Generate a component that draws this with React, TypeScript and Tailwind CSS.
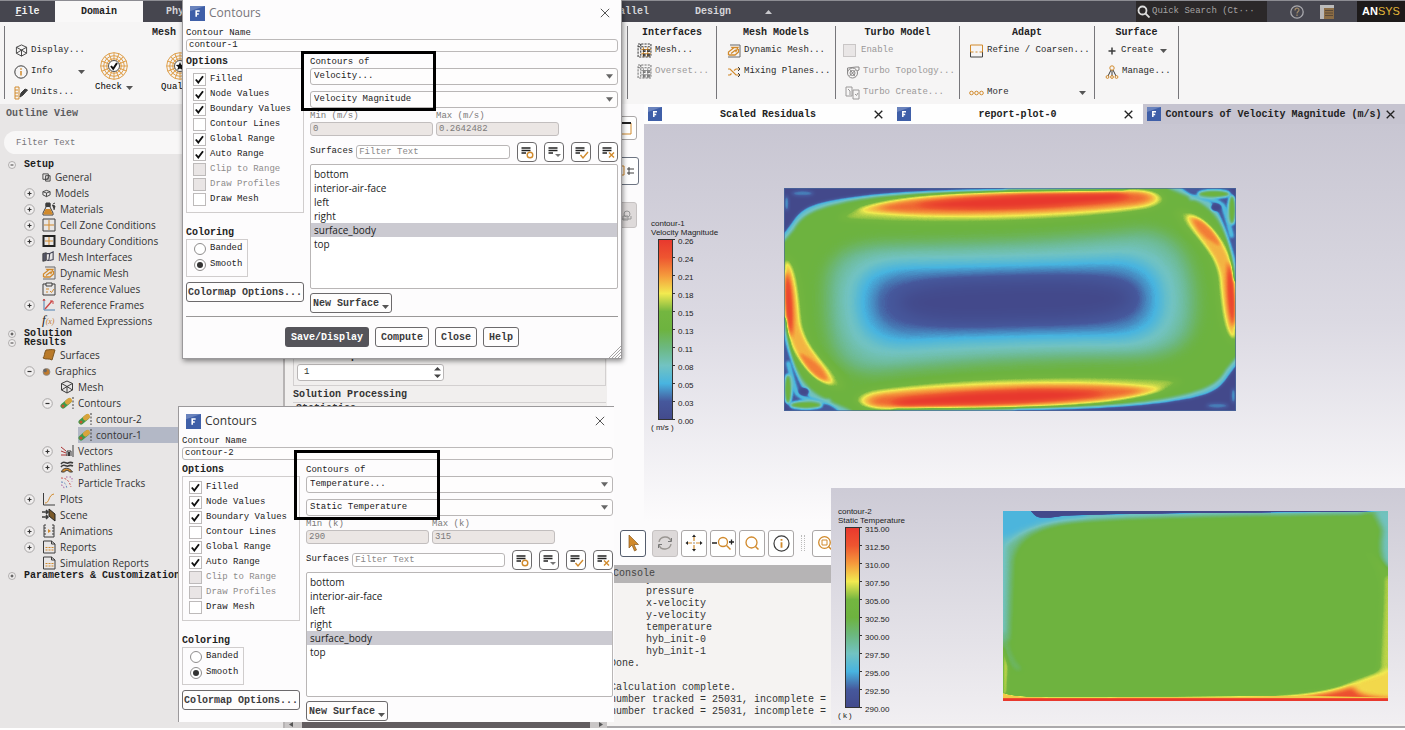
import React from "react";

/* ---------- colour map shared by legends and plots ---------- */
const RAMP = ["#434a8c", "#46589c", "#48b4e0", "#72c3c2", "#6cb880", "#6db33f", "#74b640", "#f2ea50", "#f59a3c", "#ee5530", "#e8382e"];

function gray(t: number) {
  const v = Math.round(t * 255);
  return `rgb(${v},${v},${v})`;
}

function ColorMapFilter({ id }: { id: string }) {
  return (
    <filter id={id} x="0" y="0" width="1" height="1" colorInterpolationFilters="sRGB">
      <feComponentTransfer>
        <feFuncR type="table" tableValues=".263 .275 .282 .447 .424 .427 .455 .949 .96 .933 .91" />
        <feFuncG type="table" tableValues=".29 .345 .706 .765 .72 .702 .714 .918 .604 .333 .22" />
        <feFuncB type="table" tableValues=".549 .612 .878 .76 .5 .247 .25 .314 .235 .188 .18" />
      </feComponentTransfer>
    </filter>
  );
}

function Blur({ id, d }: { id: string; d: string }) {
  return (
    <filter id={id} x="-50%" y="-100%" width="200%" height="300%" colorInterpolationFilters="sRGB">
      <feGaussianBlur stdDeviation={d} />
    </filter>
  );
}

function VelocityHalf() {
  return (
    <g>
      {/* lid jet */}
      <path d="M200 146 C250 96 450 64 750 58 L1110 56 C1200 62 1210 104 1120 120 C900 154 500 170 200 146Z" fill={gray(0.65)} filter="url(#v10)" />
      <path d="M262 120 C320 88 500 72 720 65 L1110 61 C1172 66 1182 92 1124 107 C940 134 480 152 262 120Z" fill={gray(0.76)} filter="url(#vJet)" />
      <path d="M320 114 C380 90 520 78 720 71 L1090 66 C1150 70 1156 88 1106 97 C920 120 480 138 320 114Z" fill={gray(0.87)} filter="url(#vJet)" />
      <path d="M440 104 C540 86 700 78 800 74 L1040 70 C1090 74 1070 86 1000 92 C800 112 580 120 440 104Z" fill={gray(1)} filter="url(#vJet)" />
      {/* upper left corner */}
      <path d="M20 30 L1120 30 L1060 55 C560 58 330 68 210 98 C120 118 92 140 72 176 L42 212 L20 212Z" fill={gray(0.28)} filter="url(#v5)" />
      <path d="M20 30 L760 30 L700 54 C420 58 300 68 190 88 C110 104 90 120 66 156 L42 188 L20 188Z" fill={gray(0)} filter="url(#v5)" />
      <ellipse cx="98" cy="68" rx="34" ry="9" fill={gray(0.15)} filter="url(#v5)" />
      <ellipse cx="50" cy="98" rx="6" ry="24" fill={gray(0.2)} filter="url(#v5)" />
      {/* right wall stream */}
      <path d="M1215 118 C1280 100 1380 210 1398 300 L1398 530 C1336 490 1352 350 1326 270 C1296 200 1236 190 1215 118Z" fill={gray(0.63)} filter="url(#v10)" />
      <path d="M1250 136 C1290 124 1350 190 1376 256 C1390 310 1396 400 1394 506 C1368 490 1358 400 1352 320 C1338 240 1266 190 1250 136Z" fill={gray(0.77)} filter="url(#v7)" />
      <path d="M1268 146 C1298 142 1336 190 1352 226 C1316 212 1280 184 1268 146Z" fill={gray(0.84)} filter="url(#v5)" />
      <path d="M1376 270 C1394 320 1398 400 1392 472 C1374 440 1368 340 1376 270Z" fill={gray(0.98)} filter="url(#v7)" />
      {/* upper right corner */}
      <path d="M1195 40 L1195 52 C1250 78 1300 90 1335 135 C1370 180 1388 260 1394 330 L1420 330 L1420 40Z" fill={gray(0.3)} filter="url(#v5)" />
      <path d="M1225 40 C1240 70 1290 84 1318 92 C1350 120 1382 210 1398 285 L1410 285 L1410 40Z" fill={gray(0.1)} filter="url(#v3)" />
      <path d="M1258 84 C1300 72 1340 88 1360 106 C1372 140 1378 170 1386 200" fill="none" stroke={gray(0.28)} strokeWidth="10" filter="url(#v5)" />
      <ellipse cx="1332" cy="70" rx="48" ry="11" fill={gray(0.52)} filter="url(#v5)" />
      <ellipse cx="1386" cy="118" rx="11" ry="44" fill={gray(0.52)} filter="url(#v5)" />
      <path d="M1374 48 L1404 48 L1404 86Z" fill={gray(0)} filter="url(#v3)" />
      <ellipse cx="1338" cy="110" rx="15" ry="11" fill={gray(0)} filter="url(#v3)" />
    </g>
  );
}

function VelocityPlot() {
  return (
    <svg viewBox="42 52 1356 670" preserveAspectRatio="none" className="mt-16 h-[223px] w-[452px] shrink-0 overflow-hidden" role="img" aria-label="Velocity magnitude field">
      <defs>
        <ColorMapFilter id="velMap" />
        <Blur id="v3" d="3" />
        <Blur id="v5" d="5" />
        <Blur id="v7" d="7" />
        <Blur id="v10" d="14 10" />
        <Blur id="vJet" d="16 7" />
        <Blur id="v16" d="16" />
        <Blur id="v22" d="22" />
        <Blur id="v30" d="26 22" />
      </defs>
      <g filter="url(#velMap)">
        <rect x="42" y="52" width="1356" height="670" fill={gray(0.5)} />
        <path d="M170 360 C170 260 220 228 330 222 C620 220 900 206 1110 180 C1226 182 1274 270 1274 400 C1274 510 1226 552 1120 556 C860 560 620 568 330 604 C205 618 165 520 170 360Z" fill={gray(0.36)} filter="url(#v30)" />
        <path d="M215 385 C215 290 270 254 380 250 C640 248 870 240 1070 226 C1180 224 1228 300 1228 390 C1228 490 1166 534 1060 536 C820 536 620 542 380 562 C250 572 215 490 215 385Z" fill={gray(0.29)} filter="url(#v22)" />
        <path d="M262 392 C262 314 310 286 400 282 C640 280 860 274 1045 264 C1140 266 1178 320 1178 390 C1178 466 1130 502 1040 504 C810 506 630 508 405 522 C300 524 262 470 262 392Z" fill={gray(0.2)} filter="url(#v16)" />
        <path d="M310 396 C310 340 345 318 430 314 C640 310 860 304 1020 300 C1100 304 1132 340 1130 388 C1128 440 1096 468 1020 472 C800 474 640 476 430 486 C345 486 310 450 310 396Z" fill={gray(0.11)} filter="url(#v22)" />
        <path d="M380 394 C400 340 560 335 720 330 C900 325 1060 325 1090 380 C1060 450 880 448 720 452 C560 458 400 460 380 394Z" fill={gray(0)} filter="url(#v30)" />
        <VelocityHalf />
        <g transform="rotate(180 720 387)">
          <VelocityHalf />
        </g>
      </g>
      <rect x="43" y="53" width="1354" height="668" fill="none" stroke="#4a6a9c" strokeWidth="2" />
    </svg>
  );
}

function TemperaturePlot() {
  return (
    <svg viewBox="473 93 1050 571" preserveAspectRatio="none" className="mt-[23px] h-[190px] w-[385px] shrink-0 overflow-hidden" role="img" aria-label="Static temperature field">
      <defs>
        <ColorMapFilter id="tempMap" />
        <Blur id="t2" d="2" />
        <Blur id="t4" d="4" />
        <Blur id="t8" d="8" />
      </defs>
      <g filter="url(#tempMap)">
        <rect x="473" y="93" width="1050" height="571" fill={gray(0.52)} />
        <path d="M440 70 L1500 70 L1480 98 C1100 102 800 108 680 124 C560 140 514 176 500 240 L491 480 L440 520Z" fill={gray(0.38)} filter="url(#t8)" />
        <path d="M440 70 L1480 70 L1450 98 C1000 103 760 109 620 124 C560 136 510 164 482 200 L476 460 L440 460Z" fill={gray(0.27)} filter="url(#t8)" />
        <path d="M440 70 L700 70 L700 108 C600 116 540 136 490 168 L440 180Z" fill={gray(0.21)} filter="url(#t8)" />
        <path d="M530 70 L1540 70 L1540 94 L1400 96 C1000 98 760 102 640 107 C600 114 570 118 558 104Z" fill={gray(0)} filter="url(#t2)" />
        <path d="M480 490 C486 530 505 560 520 572" stroke={gray(0.4)} strokeWidth="12" fill="none" filter="url(#t8)" />
        <path d="M473 500 L488 560 L484 640 L473 650Z" fill={gray(0.66)} filter="url(#t4)" />
        <path d="M1480 85 L1550 85 L1550 270 L1522 270 C1500 230 1502 190 1508 150Z" fill={gray(0.3)} filter="url(#t8)" />
        <path d="M1425 180 C1500 240 1510 300 1508 400 L1506 560 C1470 610 1380 640 1250 645 L1550 660 L1550 290Z" fill={gray(0.59)} filter="url(#t8)" />
        <path d="M1515 290 L1540 290 L1540 600 L1500 580Z" fill={gray(0.66)} filter="url(#t8)" />
        <path d="M1110 656 C1260 650 1340 644 1400 618 C1450 594 1490 580 1550 562 L1550 680 L1110 680Z" fill={gray(0.72)} filter="url(#t8)" />
        <path d="M1220 658 C1340 650 1390 634 1430 622 C1430 645 1470 654 1550 658 L1550 680 L1220 680Z" fill={gray(0.92)} filter="url(#t8)" />
        <path d="M460 634 C490 656 560 654 900 651 L1300 648 L1550 654 L1550 690 L460 690Z" fill={gray(0.74)} filter="url(#t2)" />
        <rect x="440" y="656" width="1120" height="24" fill={gray(1)} filter="url(#t2)" />
      </g>
    </svg>
  );
}

function Legend({ id, name, field, unit, ticks }: { id: string; name: string; field: string; unit: string; ticks: string[] }) {
  const stops = [...RAMP].reverse();
  return (
    <div className="shrink-0 font-['Liberation_Sans',sans-serif] text-[8px] leading-[9px] text-[#222]">
      <div>{name}</div>
      <div className="whitespace-nowrap">{field}</div>
      <div className="flex h-[186px] gap-[3px] pl-[7px]">
        <svg viewBox="0 0 17 182" className="mt-[2px] h-[182px] w-[17px] shrink-0">
          <defs>
            <linearGradient id={id} x1="0" y1="0" x2="0" y2="1">
              {stops.map((c, i) => (
                <stop key={c} offset={`${i * 10}%`} stopColor={c} />
              ))}
            </linearGradient>
          </defs>
          <rect x=".5" y=".5" width="14" height="180" fill={`url(#${id})`} stroke="#333" strokeWidth="1" />
          {ticks.map((t, i) => (
            <path key={t} d={`M14 ${0.5 + i * 18}h3`} stroke="#333" strokeWidth="1" />
          ))}
        </svg>
        <ul>
          {ticks.map((t) => (
            <li key={t} className="h-[18px]">{t}</li>
          ))}
        </ul>
      </div>
      <div>{unit}</div>
    </div>
  );
}

/* ---------- icons ---------- */
const O = "#d18a2c";
const K = "#3c3c3c";

function Svg({ w = 14, h = 14, vb = "0 0 14 14", children }: { w?: number; h?: number; vb?: string; children: React.ReactNode }) {
  return (
    <svg width={w} height={h} viewBox={vb} fill="none" stroke={K} strokeWidth="1" className="shrink-0" aria-hidden="true">
      {children}
    </svg>
  );
}

const IconCube = ({ s = 13 }: { s?: number }) => (
  <Svg w={s} h={s}>
    <path d="M7 1 12.5 3.500v6.500L7 13 1.500 10v-6.500ZM1.500 3.500 7 6.500l5.500-3M7 6.500V13M1.500 10 7 6.500 12.500 10" />
  </Svg>
);
const IconInfo = ({ s = 14 }: { s?: number }) => (
  <Svg w={s} h={s}>
    <circle cx="7" cy="7" r="6.200" />
    <path d="M7 6v4.500M7 3.300v1.500" stroke={O} strokeWidth="1.500" />
  </Svg>
);
const IconUnits = () => (
  <Svg>
    <path d="M1 1h4v12H1ZM1 4h3M1 7h3M1 10h3" stroke={O} />
    <path d="M6 11 7 7l4-4 2.500 1L9 9Z" fill={K} />
  </Svg>
);
const IconWheel = ({ star }: { star?: boolean }) => (
  <Svg w={28} h={28} vb="0 0 28 28">
    <g stroke="#dfa04c">
      <circle cx="14" cy="14" r="13.300" />
      <circle cx="14" cy="14" r="10.300" />
      <circle cx="14" cy="14" r="7.300" />
      {[0, 22, 45, 67, 90, 112, 135, 157].map((a) => (
        <path key={a} d="M14 .7v26.600" transform={`rotate(${a} 14 14)`} />
      ))}
    </g>
    <circle cx="14" cy="14" r="5.500" fill="#fff" stroke="#555" />
    {star ? (
      <path d="m14 10 1.200 2.800 3 .2-2.300 2 .8 3-2.700-1.600L11.300 18l.8-3-2.300-2 3-.2Z" fill="#111" stroke="none" />
    ) : (
      <path d="m11 14 2.200 2.800L17 11" stroke="#111" strokeWidth="2" />
    )}
  </Svg>
);
const IconGrid = ({ c = O, b = K }: { c?: string; b?: string }) => (
  <Svg w={15} h={15}>
    <path d="M1 13V1h12v12ZM3.500 1v12M1 3.500h12" stroke={b} strokeDasharray="2 1" />
    <path d="M4 6h9M4 10h9M6 4v9M10 4v9" stroke={c} />
    <path d="M6 6.500h1.500v1.500H6ZM10 6.500h1.500v1.500H10ZM6 10.500h1.500V12H6ZM10 10.500h1.500V12H10Z" stroke={b} />
  </Svg>
);
const IconDyn = ({ s = 14 }: { s?: number }) => (
  <Svg w={s} h={s}>
    <path d="M3 1h10v12H1" stroke="#666" />
    <path d="M1.500 11V8L6 4.500l-1-1h6L9 7.500l-.7-1.200L4 9.500M1.500 11 8 11l3.500-3V5" stroke={O} strokeWidth="1.300" />
  </Svg>
);
const IconMix = () => (
  <Svg>
    <path d="M1 4h2l6 6h4M1 10h2l1.500-1.500M7 5.500 9 4h4" stroke={O} strokeWidth="1.200" />
    <path d="m11 2 2 2-2 2M11 8l2 2-2 2" />
  </Svg>
);
const IconTopo = () => (
  <Svg>
    <g stroke="#8a8888">
      <circle cx="6.500" cy="8" r="5" />
      <circle cx="6.500" cy="8" r="2.500" />
      <path d="M1.500 8V3l8.500-1h3v3l-2 1M4 4.500l5 7M9.500 5l-6 6" />
    </g>
  </Svg>
);
const IconPages = () => (
  <Svg w={15} h={14} vb="0 0 15 14">
    <g stroke="#9a9898">
      <path d="M1 1h6v9H1ZM3 3l2 2v4M8 4h6v9H8ZM10 8l1.500 1.500L13 7" />
    </g>
  </Svg>
);
const IconRefine = () => (
  <Svg w={15} h={14}>
    <path d="M1 8V1h12v7" stroke={O} />
    <path d="M1 8v5h12V8" stroke="#444" />
    <path d="M1 8h3M6 8h2M10 8h3" stroke={O} />
  </Svg>
);
const IconMore = () => (
  <Svg w={15} h={6} vb="0 0 15 6">
    <circle cx="2.500" cy="3" r="1.800" stroke={O} />
    <circle cx="7.500" cy="3" r="1.800" stroke={O} />
    <circle cx="12.500" cy="3" r="1.800" stroke={O} />
  </Svg>
);
const IconManage = () => (
  <Svg>
    <path d="M6 5 3 11M8 5l3 6M7 5v6" />
    <circle cx="7" cy="3" r="2.200" stroke={O} />
    <circle cx="2.500" cy="12" r="1.400" stroke={O} />
    <circle cx="7" cy="12" r="1.400" stroke={O} />
    <circle cx="11.500" cy="12" r="1.400" stroke={O} />
  </Svg>
);
const Caret = ({ up }: { up?: boolean }) => (
  <svg width="7" height="4" viewBox="0 0 7 4" className="shrink-0" aria-hidden="true">
    <path d={up ? "M0 4h7L3.500 0Z" : "M0 0h7L3.500 4Z"} fill={up ? "#c8c8cc" : "#555"} />
  </svg>
);
const IconX = ({ s = 9, c = "#222", w = 1.5 }: { s?: number; c?: string; w?: number }) => (
  <svg width={s} height={s} viewBox="0 0 10 10" className="shrink-0" aria-hidden="true">
    <path d="M.8.8 9.200 9.200M9.200.8.8 9.200" stroke={c} strokeWidth={w} />
  </svg>
);
const LogoF = ({ s = 14 }: { s?: number }) => (
  <svg width={s} height={s} viewBox="0 0 14 14" className="shrink-0" aria-hidden="true">
    <rect width="14" height="14" fill="#3f5fa8" />
    <path d="M0 0h14L0 5Z" fill="#6a83bd" />
    <path d="M5.800 10v-5.300h3.200M5.800 7.400h2.400" stroke="#fff" strokeWidth="1.500" fill="none" />
  </svg>
);

/* outline tree icons */
const treeIcons: Record<string, React.ReactNode> = {
  general: (
    <Svg w={9} h={9} vb="0 0 10 10"><path d="M1 1h6v6H1ZM4 3h5v6H4ZM5 7l3-3" /></Svg>
  ),
  models: (
    <Svg w={9} h={9} vb="0 0 10 10"><path d="M5 1.500 9 3v3.500L5 8.500 1 6.500V3ZM1 3l4 1.500L9 3M5 4.500v4" /></Svg>
  ),
  materials: (
    <Svg><path d="M4 1h4v4l3 6v2H1v-2l3-6Z" /><path d="M3.500 7h5l2 4.500v1h-9v-1Z" fill={O} stroke="none" /><path d="M4 1.500h4v3H4ZM10 3l3 1-1 4M11 2l2-1" fill={K} /></Svg>
  ),
  cell: (
    <Svg><path d="M1 1h12v12H1Z" /><path d="M7 2v10M2 7h10" stroke={O} /></Svg>
  ),
  boundary: (
    <Svg><path d="M1.500 2h11v10h-11Z" stroke="#222" strokeWidth="2" /><path d="M7 3v8M3 7h8" stroke={O} /></Svg>
  ),
  meshi: (
    <Svg w={12} h={12}><path d="M1 3 5 2v9l-4 1Z" fill="#556" /><path d="M5 3h4l-1 8H6M9 3l4-2v9l-4 1" stroke="#445" strokeWidth="1.300" /></Svg>
  ),
  dyn: <IconDyn />,
  refv: (
    <Svg><path d="M1 2h3M10 2h3v11H1V2M4 1h6v3H4Z" /><path d="M4 7h3M4 10h2M8 9l1.500 1.500L12 7" stroke={O} /></Svg>
  ),
  refF: (
    <Svg><path d="M2 1v11h11" stroke="#4a7fb0" /><path d="m3 11 7-8" stroke="#c44" strokeWidth="1.400" /><path d="M8 3h3v3M1 3l1-2 1 2" stroke="#c44" /></Svg>
  ),
  surfaces: (
    <Svg><path d="M4 2c3 0 5-1 9 0L10 12c-3-2-6 0-9-2 2-2 1-5 3-8Z" fill="#b97a2a" stroke="#7d5520" /></Svg>
  ),
  graphics: (
    <Svg w={9} h={9} vb="0 0 10 10"><circle cx="5" cy="5.500" r="3.800" fill="#c07a2c" stroke="#888" /><circle cx="3.500" cy="4" r="2" fill="#666" stroke="none" /></Svg>
  ),
  mesh: <IconCube s={14} />,
  contour: (
    <Svg><path d="m3 10 6-5" stroke="#3f9a4a" strokeWidth="5" strokeLinecap="round" /><path d="M7.500 6 9.500 4.500" stroke="#d9a43c" strokeWidth="5" strokeLinecap="round" /><path d="M3 10h0" stroke="#c8552e" strokeWidth="3" strokeLinecap="round" /><path d="M13 1v12" strokeDasharray="2 1.500" /></Svg>
  ),
  vectors: (
    <Svg><path d="m1 3 5 4M1 7l5 2M1 11h6" stroke="#a33" /><path d="M7 12V7h4v5M13 1v12" /><path d="M9 8v4" strokeWidth="2" /></Svg>
  ),
  path: (
    <Svg><path d="M1 4c3-4 5 0 7-1s3-1 5 0M1 7c3-4 5 0 7-1s3-1 5 0" strokeWidth="1.500" /><path d="M1.500 12c1-5 8-5 11 0h-3c-1-2-4-2-5 0Z" fill={O} /></Svg>
  ),
  particle: (
    <Svg><path d="M1 2c5 0 8 2 10 9" stroke="#c55" strokeDasharray="2 1.500" /><path d="M1 6c4 0 5 2 6 7" stroke="#68b" strokeDasharray="2 1.500" /><path d="M1 9c2 0 3 1 3 4M6 1h6v5" stroke="#a6a" strokeDasharray="1.500 2" /></Svg>
  ),
  plots: (
    <Svg><path d="M1.500 1v12H13" /><path d="M3 11c5 0 3-8 9-9" stroke={O} /></Svg>
  ),
  scene: (
    <Svg><path d="M0 4h5M0 9h5M4 2l2 2-2 2M4 7l2 2-2 2" strokeWidth="1.500" /><path d="m7 1 6 5v7L7 8Z" fill="#7b5a2a" stroke="#222" /></Svg>
  ),
  anim: (
    <Svg><path d="M2 1v12M12 1v12M2 1h2M2 4h2M2 7h2M2 10h2M2 13h10M10 1h2M10 4h2M10 7h2M10 10h2" /><path d="m6 5 3 2-3 2Z" fill={O} stroke="none" /></Svg>
  ),
  report: (
    <Svg><path d="M1.500 1h8l3.500 3v9H1.500ZM9.500 1v3H13" /><path d="M3.500 7.500h8M3.500 10h8" stroke={O} strokeDasharray="2 1" /></Svg>
  ),
};

const IconFx = () => (
  <span className="w-[14px] shrink-0 font-['Liberation_Serif',serif] text-[13px] leading-[14px] italic text-[#222]">
    f<span className="text-[8px] text-[#c07a2c]">(x)</span>
  </span>
);

function Expander({ open }: { open: boolean }) {
  return (
    <svg width="11" height="11" viewBox="0 0 11 11" className="shrink-0" aria-hidden="true">
      <circle cx="5.500" cy="5.500" r="4.800" fill="#f1efef" stroke="#a9a7a7" />
      <path d={open ? "M3.500 5.500h4" : "M3.500 5.500h4M5.500 3.500v4"} stroke="#333" strokeWidth="1.200" />
    </svg>
  );
}

type Node = { label: string; level: 1 | 2 | 3; icon: string; exp?: "open" | "closed"; sel?: boolean };
const setup: Node[] = [
  { label: "General", level: 1, icon: "general" },
  { label: "Models", level: 1, icon: "models", exp: "closed" },
  { label: "Materials", level: 1, icon: "materials", exp: "closed" },
  { label: "Cell Zone Conditions", level: 1, icon: "cell", exp: "closed" },
  { label: "Boundary Conditions", level: 1, icon: "boundary", exp: "closed" },
  { label: "Mesh Interfaces", level: 1, icon: "meshi" },
  { label: "Dynamic Mesh", level: 1, icon: "dyn" },
  { label: "Reference Values", level: 1, icon: "refv" },
  { label: "Reference Frames", level: 1, icon: "refF", exp: "closed" },
  { label: "Named Expressions", level: 1, icon: "fx" },
];
const results: Node[] = [
  { label: "Surfaces", level: 1, icon: "surfaces" },
  { label: "Graphics", level: 1, icon: "graphics", exp: "open" },
  { label: "Mesh", level: 2, icon: "mesh" },
  { label: "Contours", level: 2, icon: "contour", exp: "open" },
  { label: "contour-2", level: 3, icon: "contour" },
  { label: "contour-1", level: 3, icon: "contour", sel: true },
  { label: "Vectors", level: 2, icon: "vectors", exp: "closed" },
  { label: "Pathlines", level: 2, icon: "path", exp: "closed" },
  { label: "Particle Tracks", level: 2, icon: "particle" },
  { label: "Plots", level: 1, icon: "plots", exp: "closed" },
  { label: "Scene", level: 1, icon: "scene" },
  { label: "Animations", level: 1, icon: "anim", exp: "closed" },
  { label: "Reports", level: 1, icon: "report", exp: "closed" },
  { label: "Simulation Reports", level: 1, icon: "report" },
];
const indent = { 1: "pl-6", 2: "pl-[42px]", 3: "pl-[60px]" };

function TreeRow({ n }: { n: Node }) {
  return (
    <li className={`flex h-4 items-center ${indent[n.level]}`}>
      <span className="flex w-[18px] shrink-0">{n.exp && <Expander open={n.exp === "open"} />}</span>
      <span className={`flex h-4 flex-1 items-center gap-1 whitespace-nowrap ${n.sel ? "bg-[#b3b8c6]" : ""}`}>
        {n.icon === "fx" ? <IconFx /> : treeIcons[n.icon]}
        {n.label}
      </span>
    </li>
  );
}

function TreeSection({ label, open }: { label: string; open: boolean }) {
  return (
    <div className="flex h-[9px] items-center gap-2 pl-2 text-[10px] leading-[9px] font-bold whitespace-nowrap text-[#1c1c1c]">
      <svg width="8" height="8" viewBox="0 0 11 11" className="shrink-0" aria-hidden="true">
        <circle cx="5.500" cy="5.500" r="4.800" fill="#f1efef" stroke="#9a9898" />
        <path d={open ? "M3.500 5.500h4" : "M3.500 5.500h4M5.500 3.500v4"} stroke="#333" strokeWidth="1.300" />
      </svg>
      {label}
    </div>
  );
}

function Outline() {
  return (
    <aside className="w-[283px] shrink-0 bg-[#e8e6e6]">
      <h2 className="flex h-[19px] items-center pl-[6px] text-[10px] font-bold text-[#5c5c60]">Outline View</h2>
      <input aria-label="Filter outline" placeholder="Filter Text" className="mt-2 ml-1 block h-[23px] w-[270px] rounded-full bg-[#f8f7f7] pl-3 text-[9px] outline-none placeholder:text-[#77757a]" />
      <div className="pt-[6px] font-['Liberation_Mono',monospace]">
        <TreeSection label="Setup" open />
        <ul className="font-['Open_Sans','Noto_Sans',sans-serif] text-[10px] leading-4 text-[#333]">
          {setup.map((n) => <TreeRow key={n.label} n={n} />)}
        </ul>
        <TreeSection label="Solution" open={false} />
        <TreeSection label="Results" open />
        <ul className="font-['Open_Sans','Noto_Sans',sans-serif] text-[10px] leading-4 text-[#333]">
          {results.map((n) => <TreeRow key={n.label} n={n} />)}
        </ul>
        <TreeSection label="Parameters & Customization" open={false} />
      </div>
    </aside>
  );
}

/* ---------- header and ribbon ---------- */
function Header() {
  return (
    <header className="flex h-[22px] shrink-0 items-stretch border-t border-[#8d8d93] bg-[#46464f] text-[10px] font-bold text-[#d6d6da]">
      <button className="w-[55px] shrink-0 text-[#f0f0f0]"><u>F</u>ile</button>
      <button className="w-[88px] shrink-0 bg-[#f9f8f8] text-[#222]">Domain</button>
      <button className="w-[446px] shrink-0 pl-[23px] text-left">Physics</button>
      <button className="w-[72px] shrink-0">Parallel</button>
      <button className="w-[104px] shrink-0">Design</button>
      <button aria-label="Collapse ribbon" className="flex shrink-0 items-center"><Caret up /></button>
      <div className="flex-1" />
      <label className="flex w-[131px] shrink-0 items-center gap-[2px] bg-[#2b2829] pl-px">
        <svg width="13" height="13" viewBox="0 0 13 13" fill="none" stroke="#ddd" strokeWidth="1.800" className="shrink-0" aria-hidden="true">
          <circle cx="5.500" cy="5.500" r="4" />
          <path d="m8.500 8.500 4 4" />
        </svg>
        <input aria-label="Quick Search" placeholder="Quick Search (Ct···" className="w-full min-w-0 bg-transparent text-[9px] font-normal outline-none placeholder:text-[#a5a3a3]" />
      </label>
      <div className="flex w-[90px] shrink-0 items-center justify-center gap-4">
        <button aria-label="Help">
          <svg width="14" height="14" viewBox="0 0 14 14" fill="none" stroke="#a9a9ae" className="block" aria-hidden="true">
            <circle cx="7" cy="7" r="6.200" strokeWidth="1.300" />
            <path d="M5 5.500c0-3 4-3 4-.5 0 1.500-2 1.500-2 3.500M7 9.500V11" stroke="#a08a6a" strokeWidth="1.200" />
          </svg>
        </button>
        <button aria-label="Layout">
          <svg width="14" height="14" viewBox="0 0 14 14" className="block" aria-hidden="true">
            <path d="M0 0h14v3H0Z" fill="#bbb" />
            <path d="M0 3h4v11H0Z" fill="#b9b7b7" />
            <path d="M4 3h10v11H4Z" fill="#8c6d45" />
            <path d="M5 5.500h8M5 8h8M5 10.500h8" stroke="#5b4a38" />
          </svg>
        </button>
      </div>
      <div className="flex w-12 shrink-0 items-center justify-center bg-[#1d1a1a] font-['Liberation_Sans',sans-serif] text-[11px] font-normal text-[#e3b93a]">
        <span className="font-bold text-white">AN</span>SYS
      </div>
    </header>
  );
}

function Group({ title, className, children }: { title: string; className: string; children?: React.ReactNode }) {
  return (
    <section className={`h-[73px] shrink-0 border-r border-[#77767a] ${className}`}>
      <h3 className="h-[14px] text-center text-[10px] leading-[14px] font-bold text-[#222]">{title}</h3>
      {children}
    </section>
  );
}

function Cmd({ icon, label, className = "", disabled, caret }: { icon: React.ReactNode; label: string; className?: string; disabled?: boolean; caret?: string }) {
  return (
    <button disabled={disabled} className={`flex h-[21px] w-full items-center gap-[3px] whitespace-nowrap ${disabled ? "text-[#9a9898]" : "text-[#2a2a2a]"} ${className}`}>
      {icon}
      <span>{label}</span>
      {caret !== undefined && <span className={caret}><Caret /></span>}
    </button>
  );
}

function Ribbon() {
  return (
    <nav aria-label="Ribbon" className="flex h-[82px] shrink-0 bg-[#f6f5f5] pt-1 pl-1 text-[9px]">
      <Group title="Mesh" className="w-[320px] border-l">
        <div className="flex">
          <div className="w-[82px]">
            <Cmd className="pl-[10px]" icon={<IconCube />} label="Display..." />
            <Cmd className="pl-[9px]" icon={<IconInfo />} label="Info" caret="ml-[22px]" />
            <Cmd className="pl-[9px]" icon={<IconUnits />} label="Units..." />
          </div>
          <button className="flex w-[54px] flex-col items-center pt-3">
            <IconWheel />
            <span className="flex items-center gap-1 pt-px">Check <Caret /></span>
          </button>
          <button className="flex w-[78px] flex-col items-center pt-3">
            <IconWheel star />
            <span className="flex items-center gap-1 pt-px">Quality</span>
          </button>
        </div>
      </Group>
      <Group title="" className="w-[304px]" />
      <Group title="Interfaces" className="w-[89px]">
        <Cmd className="pl-[9px]" icon={<IconGrid />} label="Mesh..." />
        <Cmd className="pl-[9px]" icon={<IconGrid c="#999" b="#777" />} label="Overset..." disabled />
      </Group>
      <Group title="Mesh Models" className="w-[119px]">
        <Cmd className="pl-[10px]" icon={<IconDyn />} label="Dynamic Mesh..." />
        <Cmd className="pl-[10px]" icon={<IconMix />} label="Mixing Planes..." />
      </Group>
      <Group title="Turbo Model" className="w-[124px]">
        <label className="flex h-[21px] items-center gap-[5px] pl-[7px] text-[#9a9898]">
          <input type="checkbox" disabled className="size-[13px] appearance-none border border-[#c9c6c6] bg-[#e9e6e6]" />
          Enable
        </label>
        <Cmd className="pl-[10px]" icon={<IconTopo />} label="Turbo Topology..." disabled />
        <Cmd className="pl-[9px]" icon={<IconPages />} label="Turbo Create..." disabled />
      </Group>
      <Group title="Adapt" className="w-[135px]">
        <Cmd className="pl-[9px]" icon={<IconRefine />} label="Refine / Coarsen..." />
        <div className="h-[21px]" />
        <Cmd className="pl-[9px]" icon={<IconMore />} label="More" caret="ml-auto pr-2" />
      </Group>
      <Group title="Surface" className="w-[84px]">
        <Cmd
          className="pl-[11px]"
          icon={<Svg w={12} h={12} vb="0 0 12 12"><path d="M6 2.500v7M2.500 6h7" strokeWidth="1.500" /></Svg>}
          label="Create"
          caret="ml-1"
        />
        <Cmd className="pl-[10px]" icon={<IconManage />} label="Manage..." />
      </Group>
    </nav>
  );
}

/* ---------- contour dialogs ---------- */
function Check({ label, checked, disabled }: { label: string; checked?: boolean; disabled?: boolean }) {
  return (
    <label className={`flex h-[15px] items-center gap-1 whitespace-nowrap ${disabled ? "text-[#8d8b8b]" : "text-[#222]"}`}>
      <span className="grid size-[13px] shrink-0 place-items-center *:[grid-area:1/1]">
        <input type="checkbox" defaultChecked={checked} disabled={disabled} className="peer size-[13px] appearance-none border border-[#bdbaba] bg-white disabled:bg-[#e9e5e5]" />
        <svg width="9" height="9" viewBox="0 0 9 9" className="pointer-events-none invisible peer-checked:visible" aria-hidden="true">
          <path d="M.8 4.500 3.300 7.500 8 1.200" stroke="#111" strokeWidth="1.900" fill="none" />
        </svg>
      </span>
      {label}
    </label>
  );
}

function Radio({ name, label, checked }: { name: string; label: string; checked?: boolean }) {
  return (
    <label className="flex h-4 items-center gap-1 text-[#222]">
      <span className="grid size-[13px] shrink-0 place-items-center *:[grid-area:1/1]">
        <input type="radio" name={name} defaultChecked={checked} className="peer size-3 appearance-none rounded-full border border-[#8f8d8d] bg-white" />
        <span className="pointer-events-none invisible size-[6px] rounded-full bg-[#333] peer-checked:visible" />
      </span>
      {label}
    </label>
  );
}

function Drop({ label, value }: { label: string; value: string }) {
  return (
    <div className="relative">
      <select aria-label={label} className="block h-[17px] w-full appearance-none rounded-[3px] border border-[#b9b6b6] bg-[#fefdfd] pl-[3px] text-[9px] text-[#1a1a1a]">
        <option>{value}</option>
      </select>
      <span className="pointer-events-none absolute top-[6px] right-[5px]"><svg width="7" height="5" viewBox="0 0 8 5" className="block"><path d="M0 0h8L4 5Z" fill="#666" /></svg></span>
    </div>
  );
}

const listGlyphs = [
  <circle key="c" cx="10" cy="10" r="2.800" stroke={O} strokeWidth="1.400" />,
  <path key="d" d="M8 9h6l-3 3Z" fill="#777" stroke="none" />,
  <path key="k" d="m6.500 10 2.500 3 5-6" stroke={O} strokeWidth="1.400" />,
  <path key="x" d="m8 7.500 5 5M13 7.500l-5 5" stroke={O} strokeWidth="1.400" />,
];
const listNames = ["Toggle shape selection", "Selection menu", "Select all", "Clear selection"];

function outlined(extra: string) {
  return `rounded-[3px] border border-[#6c6a6c] bg-[#fefdfd] text-[10px] font-bold text-[#3a3a3c] whitespace-nowrap ${extra}`;
}

function ContourDialog(p: {
  id: string; className: string; titleColor: string; name: string; field: string; sub: string; unit: string;
  min: string; max: string; mark: string; footer?: boolean;
}) {
  const surfaces = ["bottom", "interior-air-face", "left", "right", "surface_body", "top"];
  return (
    <section role="dialog" aria-label={`Contours ${p.name}`} className={`absolute border border-[#9b999b] bg-[#fdfcfd] pl-[3px] text-[9px] text-[#222] ${p.className}`}>
      <div className="flex h-[26px] items-center gap-1 pr-2 pl-1">
        <LogoF s={15} />
        <h2 className={`flex-1 font-['Open_Sans','Noto_Sans',sans-serif] text-[12px] leading-4 ${p.titleColor}`}>Contours</h2>
        <button aria-label="Close dialog"><IconX s={10} c="#555" w={1} /></button>
      </div>
      <label htmlFor={`${p.id}-name`} className="block h-[13px] leading-[15px]">Contour Name</label>
      <input id={`${p.id}-name`} defaultValue={p.name} className="block h-[13px] w-full rounded-[3px] border border-[#bcb9b9] bg-[#fefdfd] pl-[2px] outline-none" />
      <div className="flex gap-[6px] pt-1">
        <div className="w-[118px] shrink-0">
          <h3 className="h-3 text-[10px] leading-3 font-bold">Options</h3>
          <div className="h-[145px] border border-[#d0cdcd] pt-[3px] pl-[6px]">
            <Check label="Filled" checked />
            <Check label="Node Values" checked />
            <Check label="Boundary Values" checked />
            <Check label="Contour Lines" />
            <Check label="Global Range" checked />
            <Check label="Auto Range" checked />
            <Check label="Clip to Range" disabled />
            <Check label="Draw Profiles" disabled />
            <Check label="Draw Mesh" />
          </div>
          <h3 className="mt-[14px] h-3 text-[10px] leading-3 font-bold">Coloring</h3>
          <div className="h-[38px] w-[62px] border border-[#d0cdcd] pt-px pl-[6px]">
            <Radio name={`${p.id}-color`} label="Banded" />
            <Radio name={`${p.id}-color`} label="Smooth" checked />
          </div>
          <button className={outlined("mt-[5px] block h-5 w-full")}>Colormap Options...</button>
        </div>
        <div className="min-w-0 flex-1">
          <div className="h-3 leading-3">Contours of</div>
          <Drop label="Contours of" value={p.field} />
          <div className="pt-[6px]"><Drop label="Field variable" value={p.sub} /></div>
          <div className="flex gap-[3px] pt-[2px] text-[#7b7979]">
            <label className="w-[123px] leading-3">Min ({p.unit})
              <input disabled defaultValue={p.min} className="block h-[14px] w-full rounded-[3px] border border-[#c2bebe] bg-[#ebe6e4] pl-[2px] leading-3" />
            </label>
            <label className="w-[123px] leading-3">Max ({p.unit})
              <input disabled defaultValue={p.max} className="block h-[14px] w-full rounded-[3px] border border-[#c2bebe] bg-[#ebe6e4] pl-[2px] leading-3" />
            </label>
          </div>
          <div className="flex items-center gap-[7px] pt-[6px]">
            <label className="flex min-w-0 flex-1 items-center gap-[3px]">
              Surfaces
              <input placeholder="Filter Text" className="h-[14px] w-full min-w-0 rounded-[3px] border border-[#b9b6b6] bg-white pl-[2px] outline-none placeholder:text-[#8a8888]" />
            </label>
            {listGlyphs.map((g, i) => (
              <button key={listNames[i]} aria-label={listNames[i]} className="flex size-5 shrink-0 items-center justify-center rounded-[4px] border border-[#6c6a6c] bg-white">
                <Svg w={15} h={15} vb="0 0 15 15"><path d="M1.500 3h9M1.500 5.500h9M1.500 8h4.500" stroke="#222" strokeWidth="1.500" />{g}</Svg>
              </button>
            ))}
          </div>
          <ul className="mt-[2px] h-[125px] rounded-[2px] border border-[#b9b6b6] bg-white pt-[2px] font-['Open_Sans','Noto_Sans',sans-serif] text-[10px] leading-[14px]">
            {surfaces.map((s) => (
              <li key={s} className={`pl-[3px] ${s === "surface_body" ? "bg-[#cbcad1]" : ""}`}>{s}</li>
            ))}
          </ul>
          <button className={outlined("mt-1 flex h-5 w-[82px] items-center justify-between px-[2px]")}>
            New Surface <span className="pt-2"><Caret /></span>
          </button>
        </div>
      </div>
      {p.footer && (
        <div className="mt-[3px] flex justify-center gap-[6px] border-t border-[#9a9898] pt-[10px]">
          <button className="h-5 w-[84px] rounded-[3px] bg-[#55545a] text-[10px] font-bold text-white">Save/Display</button>
          <button className={outlined("h-5 w-[54px]")}>Compute</button>
          <button className={outlined("h-5 w-[42px]")}>Close</button>
          <button className={outlined("h-5 w-9")}>Help</button>
        </div>
      )}
      {p.footer && (
        <svg width="12" height="12" viewBox="0 0 12 12" className="absolute right-0 bottom-0" aria-hidden="true">
          <path d="M0 12 12 0M3 12l9-9M6 12l6-6M9 12l3-3" stroke="#a5a3a3" />
        </svg>
      )}
      <div className={`pointer-events-none absolute border-black ${p.mark}`} />
    </section>
  );
}

/* ---------- task page behind the dialogs ---------- */
function TaskPage() {
  return (
    <section aria-label="Run Calculation" className="flex w-[324px] shrink-0 flex-col border-l-2 border-[#b7b4b4] bg-[#f1efee] text-[10px] font-bold text-[#333]">
      <div className="h-[246px]" />
      <div className="mr-px ml-2 border-r border-b border-l border-[#d3d0d0] pb-1 pl-[3px]">
        <label htmlFor="interval" className="block h-[14px] leading-[14px]">Profile Update Interval</label>
        <div className="flex h-[17px] w-[147px] items-center rounded-[3px] border border-[#b9b6b6] bg-white pr-[2px]">
          <input id="interval" defaultValue="1" className="w-full min-w-0 bg-transparent pl-[6px] text-[9px] font-normal outline-none" />
          <svg width="7" height="13" viewBox="0 0 7 13" className="shrink-0" aria-hidden="true">
            <path d="M0 4.500h7L3.500 1ZM0 8.500h7L3.500 12Z" fill="#444" />
          </svg>
        </div>
      </div>
      <h3 className="mt-[2px] ml-2 h-[14px] leading-[14px]">Solution Processing</h3>
      <h4 className="mr-px ml-2 border-t border-[#d3d0d0] pl-[3px] leading-[12px]">Statistics</h4>
      <div className="flex-1" />
      <div className="flex h-[7px] items-center justify-between bg-[#c9c6c6] px-1">
        <svg width="5" height="5" viewBox="0 0 5 5"><path d="M4 0v5L0 2.500Z" fill="#555" /></svg>
        <div className="mx-2 h-[7px] flex-1 bg-[#625d60]" />
        <svg width="5" height="5" viewBox="0 0 5 5"><path d="M1 0v5l4-2.500Z" fill="#555" /></svg>
      </div>
    </section>
  );
}

/* ---------- graphics area ---------- */
function Tab({ label, className }: { label: string; className: string }) {
  return (
    <div className={`flex items-center gap-1 pr-[10px] pl-1 ${className}`}>
      <LogoF />
      <button className="flex-1 text-center font-bold whitespace-nowrap">{label}</button>
      <button aria-label={`Close ${label}`}><IconX /></button>
    </div>
  );
}

const toolBox = "flex h-[27px] w-[26px] shrink-0 items-center justify-center rounded-[3px] border";

function ViewTools() {
  return (
    <div role="toolbar" className="flex h-11 shrink-0 items-center gap-[3px] pl-[13px]">
      <button aria-label="Select" className={`${toolBox} border-[#555d6d] bg-white`}>
        <Svg w={14} h={18} vb="0 0 14 18"><path d="M3 1v13l3-3 2.500 6 2-1L8 10.500h4.500Z" fill={O} stroke="#8a5a20" strokeWidth=".7" /></Svg>
      </button>
      <button aria-label="Rotate" className={`${toolBox} ml-[3px] border-[#c6c2c2] bg-[#ddd9d9]`}>
        <Svg w={16} h={16} vb="0 0 16 16"><path d="M2 7c1-6 10-7 12-1M14 9c-1 6-10 7-12 1" stroke="#9a9692" strokeWidth="1.400" /><path d="M14.500 3v3.500H11M1.500 13V9.500H5" stroke="#777" /></Svg>
      </button>
      <button aria-label="Pan" className={`${toolBox} border-[#aaa7a7] bg-white`}>
        <Svg w={18} h={18} vb="0 0 18 18"><path d="M9 3v4M9 11v4M3 9h4M11 9h4" stroke={O} strokeWidth="1.200" /><path d="m7 3 2-2.500L11 3ZM7 15l2 2.500 2-2.500ZM3 7 .5 9 3 11ZM15 7l2.500 2-2.500 2ZM8.500 8.500h1v1h-1Z" fill="#222" stroke="none" /></Svg>
      </button>
      <button aria-label="Zoom in or out" className={`${toolBox} border-[#aaa7a7] bg-white`}>
        <Svg w={22} h={18} vb="0 0 22 18"><circle cx="11" cy="8" r="4.500" stroke={O} strokeWidth="1.300" /><path d="m14.500 11.500 4 4" stroke={O} strokeWidth="1.500" /><path d="M0 9h5M17 8h5M19.500 5.500v5" stroke="#222" strokeWidth="1.300" /></Svg>
      </button>
      <button aria-label="Zoom to area" className={`${toolBox} border-[#aaa7a7] bg-white`}>
        <Svg w={16} h={16} vb="0 0 16 16"><circle cx="7.500" cy="7.500" r="5.500" stroke={O} strokeWidth="1.300" /><path d="m11.500 11.500 3 3" stroke={O} strokeWidth="1.500" /></Svg>
      </button>
      <button aria-label="Information" className={`${toolBox} border-[#aaa7a7] bg-white`}><IconInfo s={17} /></button>
      <span className="mx-1 h-4 w-1 shrink-0 border-x border-dotted border-[#bbb]" />
      <button aria-label="Fit to window" className={`${toolBox} border-[#aaa7a7] bg-white`}>
        <Svg w={16} h={16} vb="0 0 16 16"><circle cx="7.500" cy="7.500" r="5.800" stroke={O} strokeWidth="1.300" /><path d="M5 5h5v5H5Z" stroke={O} /><path d="m11.500 11.500 3 3" stroke={O} strokeWidth="1.500" /></Svg>
      </button>
    </div>
  );
}

const consoleText = `      y-coord
      pressure
      x-velocity
      y-velocity
      temperature
      hyb_init-0
      hyb_init-1
Done.

Calculation complete.
number tracked = 25031, incomplete = 2
number tracked = 25031, incomplete = 2`;

function Graphics() {
  return (
    <main className="flex min-w-0 flex-1 flex-col bg-[#fcfbfc] text-[10px]">
      <div className="flex h-[417px] shrink-0">
        <div className="flex w-[37px] shrink-0 flex-col items-start gap-[17px] pt-3">
          <button aria-label="New window" className="flex h-6 w-[30px] items-center justify-end rounded-[3px] border border-[#aaa7a7] bg-white pr-1">
            <Svg w={10} h={14} vb="0 0 10 14"><path d="M0 2h9v11H0" stroke={O} /><path d="M0 2h9" stroke="#222" strokeWidth="2" /></Svg>
          </button>
          <button aria-label="Display options" className="flex h-7 w-8 items-center justify-end rounded-[3px] border border-[#6d7482] bg-white pr-1">
            <Svg w={14} h={12} vb="0 0 14 12"><path d="M0 1h4v9H0" stroke={O} /><path d="M7 4h7M7 8h7M9 2v4M9 6v4" /></Svg>
          </button>
          <button aria-label="Snapshot" className="flex h-[26px] w-[30px] items-center justify-end rounded-[3px] border border-[#c6c2c2] bg-[#dedada] pr-1">
            <Svg w={12} h={12} vb="0 0 12 12"><circle cx="7" cy="5" r="3" stroke="#999" /><path d="M1 10h10V7M3 7h5v4H3Z" stroke="#999" /></Svg>
          </button>
        </div>
        <div className="flex min-w-0 flex-1 flex-col">
          <div className="flex h-5 shrink-0 text-[#222]">
            <Tab label="Scaled Residuals" className="w-[249px] bg-[#fefefe]" />
            <Tab label="report-plot-0" className="w-[250px] bg-[#fefefe]" />
            <Tab label="Contours of Velocity Magnitude (m/s)" className="min-w-[262px] flex-1 bg-[#c6c4d0]" />
          </div>
          <div className="flex min-h-0 flex-1 bg-linear-to-b from-[#c8c6d2] via-[#dcdae3] to-[#fcfbfc]">
            <div className="w-[140px] shrink-0 pt-[95px] pl-[7px]">
              <Legend
                id="velRamp" name="contour-1" field="Velocity Magnitude" unit="( m/s )"
                ticks={["0.26", "0.24", "0.21", "0.18", "0.15", "0.13", "0.11", "0.08", "0.05", "0.03", "0.00"]}
              />
            </div>
            <VelocityPlot />
          </div>
        </div>
      </div>
      <ViewTools />
      <section aria-label="Console" className="flex min-h-0 flex-1 flex-col border-b-2 border-[#aba9ab] bg-[#f5f3f2]">
        <h2 className="h-[18px] shrink-0 bg-[#b6b4b5] pl-[6px] text-[10px] leading-[18px] text-[#444]">Console</h2>
        <div className="flex min-h-0 flex-1 flex-col justify-end overflow-hidden pb-2">
          <pre className="pl-[3px] font-['Liberation_Mono',monospace] text-[10px] leading-3 text-[#333]">{consoleText}</pre>
        </div>
      </section>
      <section aria-label="Static temperature view" className="absolute right-0 bottom-[6px] flex h-[236px] w-[574px] bg-linear-to-b from-[#cdcbd6] to-[#f1eff2]">
        <div className="w-[172px] shrink-0 pt-[19px] pl-[7px]">
          <Legend
            id="tempRamp" name="contour-2" field="Static Temperature" unit="( k )"
            ticks={["315.00", "312.50", "310.00", "307.50", "305.00", "302.50", "300.00", "297.50", "295.00", "292.50", "290.00"]}
          />
        </div>
        <TemperaturePlot />
      </section>
    </main>
  );
}

export default function App() {
  return (
    <div className="relative flex h-screen min-h-[730px] w-full flex-col overflow-hidden bg-white pb-[2px] font-['Liberation_Mono',monospace]">
      <Header />
      <Ribbon />
      <div className="flex min-h-0 flex-1">
        <Outline />
        <TaskPage />
        <Graphics />
      </div>
      <ContourDialog
        id="c1" className="top-0 left-[182px] h-[359px] w-[440px] border-t-0 pr-[3px] shadow-[1px_2px_5px_rgba(0,0,0,0.45)]" titleColor="text-[#77757a]"
        name="contour-1" field="Velocity..." sub="Velocity Magnitude" unit="m/s" min="0" max="0.2642482"
        mark="top-[51px] left-[118px] h-[60px] w-[135px] border-[3px]" footer
      />
      <ContourDialog
        id="c2" className="top-[406px] left-[178px] h-[316px] w-[436px] border-r-0 border-b-0 pt-px pr-px" titleColor="text-[#333]"
        name="contour-2" field="Temperature..." sub="Static Temperature" unit="k" min="290" max="315"
        mark="top-[43px] left-[115px] h-[70px] w-[146px] border-[3px]"
      />
    </div>
  );
}
